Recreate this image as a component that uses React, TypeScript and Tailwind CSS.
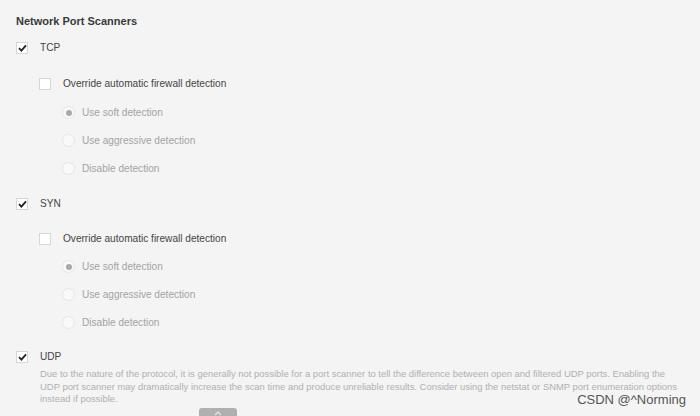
import React from 'react'

function Check({ checked }: { checked?: boolean }) {
  return (
    <span className="flex h-[12px] w-[12px] shrink-0 items-center justify-center border border-[#d6d6d6] bg-white">
      {checked && (
        <svg width="9" height="8" viewBox="0 0 9 8">
          <path d="M1 4.2 L3.4 6.6 L8 1.4" fill="none" stroke="#222" strokeWidth="1.8" />
        </svg>
      )}
    </span>
  )
}

function Radio({ checked }: { checked?: boolean }) {
  return (
    <span className="flex h-[13px] w-[13px] shrink-0 items-center justify-center rounded-full border border-[#e6e6e6] bg-[#f9f9f9]">
      {checked && <span className="h-[6px] w-[6px] rounded-full bg-[#a9a9a9]" />}
    </span>
  )
}

function Scanner({ name, tight }: { name: string; tight?: boolean }) {
  return (
    <div>
      <div className="flex h-[12px] items-center gap-[12px]">
        <Check checked />
        <span className="text-[#444]">{name}</span>
      </div>
      <div className={`ml-[23px] flex h-[12px] items-center gap-[12px] ${tight ? 'mt-[23px]' : 'mt-[24px]'}`}>
        <Check />
        <span className="text-[#444]">Override automatic firewall detection</span>
      </div>
      <div className={`ml-[46px] flex flex-col gap-[15px] text-[#a3a3a3] ${tight ? 'mt-[15px]' : 'mt-[16px]'}`}>
        {['Use soft detection', 'Use aggressive detection', 'Disable detection'].map((l, i) => (
          <div key={l} className="flex h-[13px] items-center gap-[7px]">
            <Radio checked={i === 0} />
            <span>{l}</span>
          </div>
        ))}
      </div>
    </div>
  )
}

export default function App() {
  return (
    <div
      className="relative h-[416px] w-[700px] overflow-hidden bg-[#f4f4f4] text-[10.1px]"
      style={{ fontFamily: '"Liberation Sans", Arial, sans-serif' }}
    >
      <div className="px-[16px] pt-[15px]">
        <h2 className="text-[11px] font-bold leading-[13px] text-[#3a3a3a]">Network Port Scanners</h2>
        <div className="mt-[14px] flex flex-col gap-[23px]">
          <Scanner name="TCP" />
          <Scanner name="SYN" tight />
        </div>
        <div className="mt-[22px] flex h-[12px] items-center gap-[12px]">
          <Check checked />
          <span className="text-[#444]">UDP</span>
        </div>
        <p className="ml-[24px] mt-[5px] w-[642px] text-[9.45px] leading-[12.5px] text-[#b0b0b0]">
          Due to the nature of the protocol, it is generally not possible for a port scanner to tell the difference between open and filtered UDP ports. Enabling the UDP port scanner may dramatically increase the scan time and produce unreliable results. Consider using the netstat or SNMP port enumeration options instead if possible.
        </p>
        <div className="ml-[183px] mt-[2px] flex h-[14px] w-[38px] justify-center rounded-t-[3px] bg-[#b0b0b0] pt-[2px]">
          <svg width="10" height="6" viewBox="0 0 10 6">
            <path d="M2 5 L5 2 L8 5" fill="none" stroke="#e8e8e8" strokeWidth="1.2" />
          </svg>
        </div>
      </div>
      <div className="absolute right-[14px] top-[390px] text-[13px] text-[#555]">CSDN @^Norming</div>
    </div>
  )
}
